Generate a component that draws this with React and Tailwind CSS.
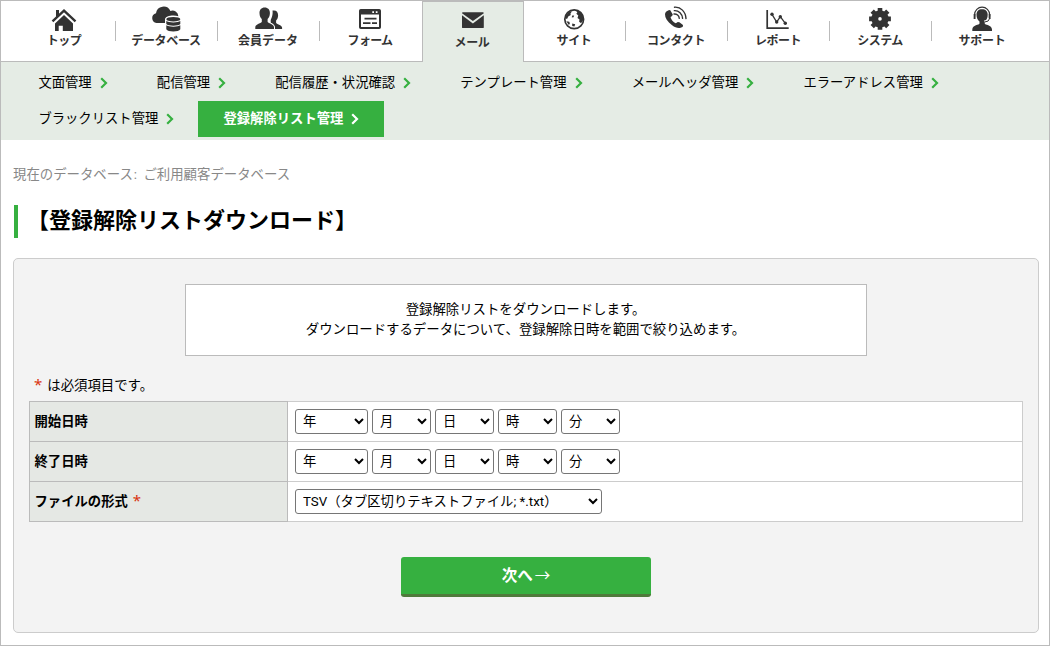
import { clsx } from "clsx";

function Icon({ children }) {
  return (
    <svg
      viewBox="0 0 31 26"
      width="31"
      height="26"
      fill="none"
      className="block shrink-0 text-[#333]"
      aria-hidden
    >
      {children}
    </svg>
  );
}

function TopIcon() {
  return (
    <Icon>
      <path d="M7 4h3v5l-3 3z" fill="currentColor" />
      <path d="M3.5 15.3 15 4.6l11.5 10.7" stroke="currentColor" strokeWidth="2.4" />
      <path d="M15 9 24 17.400V25H13.8v-5.3H9.7V25H6v-7.600z" fill="currentColor" />
    </Icon>
  );
}

function DatabaseIcon() {
  return (
    <Icon>
      <path
        d="M5.5 17A5 5 0 0 1 5 7.2 7.6 7.6 0 0 1 19.4 5a6 6 0 0 1 8 5.2C23 8.6 14 9.4 14 13.5V17z"
        fill="currentColor"
      />
      <ellipse cx="22.3" cy="13.2" rx="7" ry="2.3" fill="currentColor" />
      <path
        d="M15.3 15.1c2 1.9 12 1.9 14 0v3c-1.5 2.2-12.5 2.2-14 0zM15.3 19.3c2 1.9 12 1.9 14 0v4c-1.5 3-12.5 3-14 0z"
        fill="currentColor"
      />
    </Icon>
  );
}

function MembersIcon() {
  return (
    <Icon>
      <path
        d="M19.500 4.600c3.500-.8 5.700 1.200 5.600 4.900-.1 2.300-.8 4-2 5v2.200c0 1.500 6 2 6 5V23h-7c0-3.600-1.700-5-4.400-6.200v-2.600c.7-1.700 2.500-5.500 1.800-9.600z"
        fill="currentColor"
      />
      <path
        d="M11.7 1.400c3.300 0 5.400 2.300 5.200 5.800-.1 2.700-1 4.600-2.300 5.800v2.700c0 1.600 6.400 2 6.400 5.500V23H2.300v-1.800c0-3.500 6.500-3.900 6.500-5.500V13c-1.300-1.200-2.200-3.100-2.300-5.800-.2-3.500 1.900-5.800 5.200-5.800z"
        fill="currentColor"
        stroke="#fff"
        strokeWidth="1.6"
        paintOrder="stroke"
      />
    </Icon>
  );
}

function FormIcon() {
  return (
    <Icon>
      <rect x="5" y="4" width="20" height="18" rx=".8" stroke="currentColor" strokeWidth="2" />
      <path d="M5 4h20v4.5H5z" fill="currentColor" />
      <path d="M17.3 5.3h1.700v1.700h-1.700zM20.8 5.3h1.700v1.700h-1.700z" fill="#fff" />
      <path d="M9.5 12.700h12M8 17.200h7.500M17 17.200h5" stroke="currentColor" strokeWidth="1.7" />
    </Icon>
  );
}

function MailIcon() {
  return (
    <Icon>
      <path d="M5 7.200q0-.9.900-.9h20q.9 0 .9.900L15.900 15z" fill="currentColor" />
      <path d="M5 9.200l10.900 8.200 10.900-8.200v12q0 .9-.9.900H5.900q-.9 0-.9-.9z" fill="currentColor" />
    </Icon>
  );
}

function SiteIcon() {
  return (
    <Icon>
      <circle cx="15.200" cy="13.200" r="9.400" stroke="currentColor" strokeWidth="1.700" />
      <path
        d="M17 4.600l1.300 2-1 1.200 2 1.800-.8 2.400 2 1.500-.4 2.200 2 1.600 2.300-3.600-.4-4-3-4.200zM6.500 10l3.300-3.800 3.200-1-1.600 2.600.4 1.200-2.600 1.400-.8 2-1.700.6z"
        fill="currentColor"
      />
      <path d="M7.300 15.200l3 .6.600 1.800-1 1.400zM13.200 17.600l3 .6-.8 2.200-2.200-.4zM13.600 9.200l1.600.6-1 1.800-1.600-.4z" fill="currentColor" />
    </Icon>
  );
}

function ContactIcon() {
  return (
    <Icon>
      <path
        d="M7.6 4.200l1.500-.2 2.700 4.400-.7 1.700-1.500 1c.3 2.400 2.800 5.300 5.200 6.100l2-1.200 1.600.2 3.600 2.800-.1 1.400c-2.500 2.300-6.800 2-10.800-1.200C6.400 15.600 3.900 11.700 4 8.300c.1-2 1.500-3.400 3.600-4.100z"
        fill="currentColor"
      />
      <path
        d="M13.5 1.200c6.200-.6 11.200 4.600 11.500 11.400M13.3 4.600c4.500-.3 8 3.200 8.300 7.800M13 8c2.800-.2 5 1.700 5.300 4.300"
        stroke="currentColor"
        strokeWidth="1.4"
        strokeLinecap="round"
      />
    </Icon>
  );
}

function ReportIcon() {
  return (
    <Icon>
      <path d="M4.200 4v18.200h21.500" stroke="currentColor" strokeWidth="1.700" />
      <path d="M9 8.300l4.700 7.700 3.600-5.300 5 6.600" stroke="currentColor" strokeWidth="1.300" />
      <g fill="currentColor">
        <circle cx="9" cy="8.300" r="1.700" />
        <circle cx="13.700" cy="16" r="1.700" />
        <circle cx="17.300" cy="10.700" r="1.700" />
        <circle cx="22.300" cy="17.300" r="1.700" />
      </g>
    </Icon>
  );
}

function SystemIcon() {
  return (
    <Icon>
      <circle cx="15" cy="12.900" r="5.200" stroke="currentColor" strokeWidth="6.800" />
      <g stroke="currentColor" strokeWidth="4.600">
        <path d="M15 2v4M15 19.800v4M4.100 12.900h4M21.900 12.900h4" />
        <path d="M7.200 5.100l3 3M19.800 17.700l3 3M22.800 5.100l-3 3M10.200 17.700l-3 3" />
      </g>
    </Icon>
  );
}

function SupportIcon() {
  return (
    <Icon>
      <path
        d="M15 3.200c3.600 0 5.700 2 5.700 5.600 0 3-1.200 5.400-3 6.700v1.900c0 1.500 7.300 1.400 7.300 6V25H5.300v-1.600c0-4.600 7.200-4.500 7.200-6v-1.900c-1.800-1.300-3-3.700-3-6.700 0-3.600 2-5.600 5.500-5.600z"
        fill="currentColor"
      />
      <path d="M7.600 10.500V8.700a7.500 7.500 0 0 1 15 0v1.800" stroke="currentColor" strokeWidth="1.200" />
      <path d="M7.600 8v5M22.600 8v5" stroke="currentColor" strokeWidth="1.900" />
      <path d="M21.500 12.500q-.8 2.600-4.500 2.600" stroke="#fff" strokeWidth="1" />
      <path d="M22.600 12.500q-.6 3.400-5 3.500" stroke="currentColor" strokeWidth="1" />
    </Icon>
  );
}

const tabs = [
  { label: "トップ", icon: TopIcon, tracking: "tracking-[-0.5px]" },
  { label: "データベース", icon: DatabaseIcon, tracking: "tracking-[-0.3px]" },
  { label: "会員データ", icon: MembersIcon, tracking: "tracking-normal" },
  { label: "フォーム", icon: FormIcon, tracking: "tracking-[-0.7px]" },
  { label: "メール", icon: MailIcon, tracking: "tracking-[-0.3px]", active: true },
  { label: "サイト", icon: SiteIcon, tracking: "tracking-[-0.3px]" },
  { label: "コンタクト", icon: ContactIcon, tracking: "tracking-[-0.4px]" },
  { label: "レポート", icon: ReportIcon, tracking: "tracking-[-0.5px]" },
  { label: "システム", icon: SystemIcon, tracking: "tracking-[-0.5px]" },
  { label: "サポート", icon: SupportIcon, tracking: "tracking-[-0.3px]" },
];

const subMenu = [
  "文面管理",
  "配信管理",
  "配信履歴・状況確認",
  "テンプレート管理",
  "メールヘッダ管理",
  "エラーアドレス管理",
  "ブラックリスト管理",
  "登録解除リスト管理",
];

function Tab({ tab, divider }) {
  const TabIcon = tab.icon;
  return (
    <li
      className={clsx(
        "flex w-[102px] shrink-0",
        tab.active && "-mb-px border border-b-0 border-[#bbb] bg-[#e5ece5] pr-px",
      )}
    >
      <a
        href="#"
        className={clsx("flex flex-1 flex-col items-center", tab.active ? "pt-1" : "pt-[5px]")}
      >
        <TabIcon />
        <span
          className={clsx(
            "mr-px block text-[12px] leading-4 font-bold whitespace-nowrap text-[#333]",
            tab.tracking,
            tab.active ? "pt-[3px]" : "pt-px",
          )}
        >
          {tab.label}
        </span>
      </a>
      {!tab.active && (
        <span className={clsx("mt-5 h-5 w-px", divider ? "bg-[#bbb]" : "bg-transparent")} />
      )}
    </li>
  );
}

function SubMenuItem({ label, active }) {
  return (
    <li>
      <a
        href="#"
        className={clsx(
          "flex h-9 items-center pr-[25px] pl-[25px]",
          active ? "bg-[#36b040] font-bold text-white" : "text-black",
        )}
      >
        <span className="whitespace-nowrap">{label}</span>
        <svg
          viewBox="0 0 8 12"
          width="8"
          height="12"
          fill="none"
          className={clsx("mr-[-0.9px] ml-2", active ? "text-white" : "text-[#36b040]")}
        >
          <path d="M1.2 1.2 6 6 1.2 10.8" stroke="currentColor" strokeWidth="2.200" />
        </svg>
      </a>
    </li>
  );
}

function Select({ label, className }) {
  return (
    <select
      className={clsx(
        "h-[25px] rounded-[3px] border border-[#767676] bg-white px-[3px] text-[13.333px] text-black",
        className,
      )}
    >
      <option>{label}</option>
    </select>
  );
}

function DateSelects() {
  return (
    <div className="flex gap-1">
      <Select label="年" className="w-[73px]" />
      <Select label="月" className="w-[59px]" />
      <Select label="日" className="w-[59px]" />
      <Select label="時" className="w-[59px]" />
      <Select label="分" className="w-[59px]" />
    </div>
  );
}

function Row({ label, required, children }) {
  return (
    <tr className="h-10">
      <th className="w-[258px] border border-[#bbb] bg-[#e5e8e4] pl-[4.5px] text-left font-bold">
        {label}
        {required && (
          <span className="ml-[5px] font-['Noto_Sans'] text-[15px] leading-none font-normal text-[#d9330f]">
            *
          </span>
        )}
      </th>
      <td className="border border-[#ccc] bg-white pl-[7px]">{children}</td>
    </tr>
  );
}

export default function App() {
  return (
    <div className="h-[646px] w-[1050px] overflow-hidden border border-[#bbb] bg-white font-['Roboto','Noto_Sans_CJK_JP',sans-serif] text-[13.333px] leading-5 text-black">
      <nav>
        <ul className="flex h-[61px] border-b border-[#bbb] pl-[13px]">
          {tabs.map((tab, i) => (
            <Tab
              key={tab.label}
              tab={tab}
              divider={i < tabs.length - 1 && !tabs[i + 1].active}
            />
          ))}
        </ul>
        <ul className="flex flex-wrap bg-[#e5ece5] py-[3px] pr-20 pl-[12.4px]">
          {subMenu.map((label) => (
            <SubMenuItem key={label} label={label} active={label === "登録解除リスト管理"} />
          ))}
        </ul>
      </nav>

      <main className="px-3 pr-2.5">
        <p className="pt-[25px] text-[13.4px] text-[#888]">
          現在のデータベース<span className="mr-[3px] ml-px">:</span> ご利用顧客データベース
        </p>
        <h1 className="mt-5 ml-px flex h-[33px] items-center border-l-4 border-[#36b040] pb-[2px] pl-[9px] text-[22px] font-bold">
          【登録解除リストダウンロード】
        </h1>

        <form
          className="mt-5 h-[375px] rounded-[5px] border border-[#ccc] bg-[#f3f3f3] pt-[25px] pr-[15px] pl-[15px]"
          onSubmit={(e) => e.preventDefault()}
        >
          <div className="mx-auto h-[72px] w-[682px] border border-[#bbb] bg-white pt-[15px] pr-px text-center text-[13.4px]">
            <p>登録解除リストをダウンロードします。</p>
            <p>ダウンロードするデータについて、登録解除日時を範囲で絞り込めます。</p>
          </div>

          <p className="mt-5 h-5 pl-[5px] text-[13.4px]">
            <span className="mr-[5px] font-['Noto_Sans'] text-[15px] leading-none text-[#d9330f]">
              *
            </span>
            は必須項目です。
          </p>

          <table className="mt-[5px] w-[994px] table-fixed border-collapse">
            <tbody>
              <Row label="開始日時">
                <DateSelects />
              </Row>
              <Row label="終了日時">
                <DateSelects />
              </Row>
              <Row label="ファイルの形式" required>
                <div className="flex">
                  <Select label="TSV（タブ区切りテキストファイル; *.txt）" className="w-[307px]" />
                </div>
              </Row>
            </tbody>
          </table>

          <button
            type="submit"
            className="mx-auto mt-[35px] block h-10 w-[250px] rounded-[3px] border-b-3 border-[#4f7a3b] bg-[#36b040] text-[15.5px] font-bold text-white"
          >
            次へ<span className="ml-[2px] font-normal">→</span>
          </button>
        </form>
      </main>
    </div>
  );
}
